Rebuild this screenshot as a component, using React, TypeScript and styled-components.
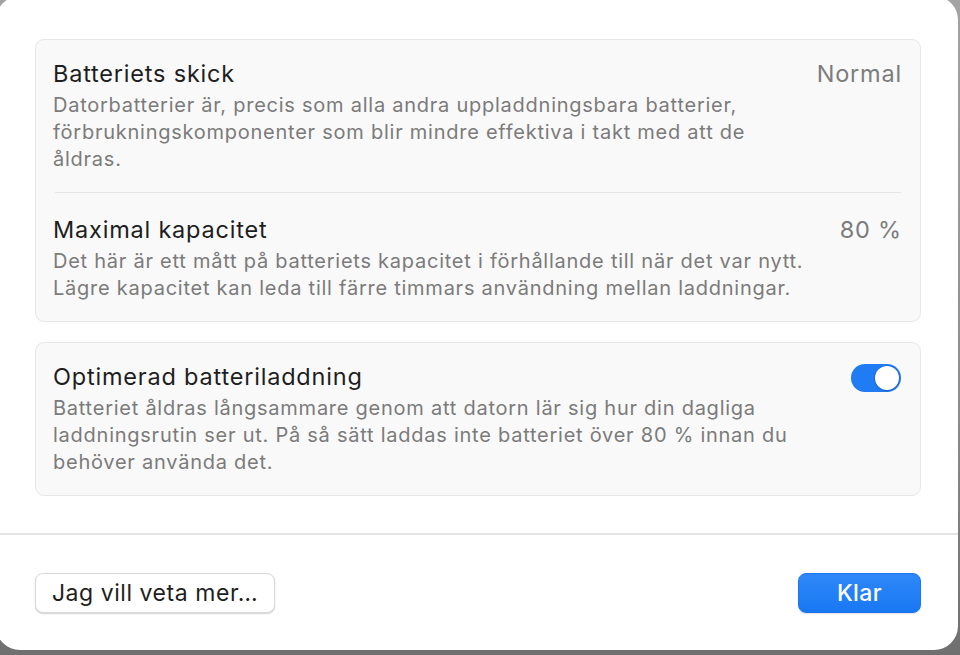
import React, { useState } from 'react'
import styled, { createGlobalStyle } from 'styled-components'

const GlobalStyle = createGlobalStyle`
    html, body {
        margin: 0;
        padding: 0;
        background: #8a8a8a;
    }
    body {
        font-family: Inter, "Noto Sans", "Liberation Sans", sans-serif;
        -webkit-font-smoothing: antialiased;
    }
`

const Frame = styled.div`
    width: 960px;
    height: 655px;
    overflow: hidden;
    background: linear-gradient(180deg, #a3a3a3 0%, #8e8e8e 60%, #6f6f6f 100%);
`

const Sheet = styled.div`
    margin: -4px 0 0 -4px;
    width: 962px;
    height: 654px;
    box-sizing: border-box;
    background: #ffffff;
    border-radius: 24px;
    display: flex;
    flex-direction: column;
`

const Content = styled.div`
    display: flex;
    flex-direction: column;
    gap: 20px;
    padding: 43px 37px 0 39px;
`

const Card = styled.div`
    background: #f9f9f9;
    border: 1px solid #e7e7e7;
    border-radius: 9px;
    padding: 0 19px;
`

const Section = styled.div<{ $divider?: boolean }>`
    display: flex;
    align-items: flex-start;
    justify-content: space-between;
    padding: ${p => (p.$divider ? '23px 0 19px' : '20px 0 19px')};
    border-top: ${p => (p.$divider ? '1px solid #e6e6e6' : 'none')};
`

const Texts = styled.div`
    display: flex;
    flex-direction: column;
    gap: 4px;
    margin-left: -2px;
`

const Title = styled.div`
    font-size: 23.5px;
    line-height: 28px;
    color: #1e1e1e;
    letter-spacing: 0.8px;
`

const Description = styled.div`
    font-size: 20px;
    line-height: 27px;
    color: #7b7b7b;
    letter-spacing: 0.75px;
    white-space: nowrap;
`

const Value = styled.div`
    font-size: 23.5px;
    line-height: 28px;
    color: #7c7c7c;
    letter-spacing: 0.8px;
    margin-right: -1px;
`

const Switch = styled.button<{ $on: boolean }>`
    display: flex;
    align-items: center;
    justify-content: ${p => (p.$on ? 'flex-end' : 'flex-start')};
    width: 50px;
    height: 28px;
    margin-top: 1px;
    padding: 2px;
    box-sizing: border-box;
    border: none;
    border-radius: 14px;
    background: ${p => (p.$on ? '#1f7cf4' : '#e2e2e2')};
    cursor: pointer;
`

const Knob = styled.span`
    width: 24px;
    height: 24px;
    border-radius: 50%;
    background: #ffffff;
    box-shadow: 0 0 0 0.5px rgba(0, 0, 0, 0.15), 0 1px 2px rgba(0, 0, 0, 0.2);
`

const Divider = styled.div`
    height: 2px;
    background: #e4e4e4;
    margin-top: 37px;
`

const Footer = styled.div`
    display: flex;
    justify-content: space-between;
    align-items: center;
    padding: 38px 37px 0 39px;
`

const Button = styled.button<{ $primary?: boolean }>`
    height: 40px;
    padding: 0 12px;
    border-radius: 8px;
    font-family: inherit;
    font-size: 23px;
    line-height: 28px;
    letter-spacing: ${p => (p.$primary ? '0.4px' : '0.55px')};
    font-weight: ${p => (p.$primary ? 500 : 400)};
    color: ${p => (p.$primary ? '#ffffff' : '#1e1e1e')};
    background: ${p => (p.$primary ? 'linear-gradient(180deg, #2f88f8 0%, #1878f3 100%)' : '#ffffff')};
    border: ${p => (p.$primary ? '1px solid #1a76ee' : '1px solid #d9d9d9')};
    box-shadow: ${p => (p.$primary ? '0 1px 1px rgba(0, 0, 0, 0.12)' : '0 1px 1.5px rgba(0, 0, 0, 0.18)')};
    cursor: pointer;
`

const LearnButton = styled(Button)`
    width: 240px;
`

const DoneButton = styled(Button)`
    width: 123px;
`

export default function App() {
    const [optimized, setOptimized] = useState(true)

    return (
        <Frame>
            <GlobalStyle />
            <Sheet>
                <Content>
                    <Card>
                        <Section>
                            <Texts>
                                <Title>Batteriets skick</Title>
                                <Description>
                                    Datorbatterier är, precis som alla andra uppladdningsbara batterier,<br />
                                    förbrukningskomponenter som blir mindre effektiva i takt med att de<br />
                                    åldras.
                                </Description>
                            </Texts>
                            <Value>Normal</Value>
                        </Section>
                        <Section $divider>
                            <Texts>
                                <Title>Maximal kapacitet</Title>
                                <Description>
                                    Det här är ett mått på batteriets kapacitet i förhållande till när det var nytt.<br />
                                    Lägre kapacitet kan leda till färre timmars användning mellan laddningar.
                                </Description>
                            </Texts>
                            <Value>80 %</Value>
                        </Section>
                    </Card>
                    <Card>
                        <Section>
                            <Texts>
                                <Title>Optimerad batteriladdning</Title>
                                <Description>
                                    Batteriet åldras långsammare genom att datorn lär sig hur din dagliga<br />
                                    laddningsrutin ser ut. På så sätt laddas inte batteriet över 80 % innan du<br />
                                    behöver använda det.
                                </Description>
                            </Texts>
                            <Switch
                                role='switch'
                                aria-checked={optimized}
                                $on={optimized}
                                onClick={() => setOptimized(!optimized)}
                            >
                                <Knob />
                            </Switch>
                        </Section>
                    </Card>
                </Content>
                <Divider />
                <Footer>
                    <LearnButton>Jag vill veta mer…</LearnButton>
                    <DoneButton $primary>Klar</DoneButton>
                </Footer>
            </Sheet>
        </Frame>
    )
}
